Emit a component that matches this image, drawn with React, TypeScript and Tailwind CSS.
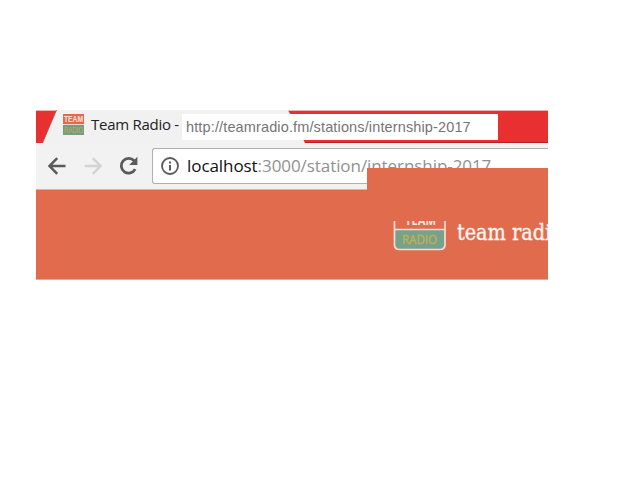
import React from "react";

function BackIcon() {
  return (
    <svg className="shrink-0" width="18" height="18" viewBox="0 0 18 18" fill="none" stroke="#5a5a5a" strokeWidth="2.5">
      <path d="M17.5 9H2M9.2 1.2L1.4 9l7.8 7.8" />
    </svg>
  );
}

function ForwardIcon() {
  return (
    <svg className="shrink-0" width="18" height="18" viewBox="0 0 18 18" fill="none" stroke="#d3d3d3" strokeWidth="2.4">
      <path d="M0.5 9H16M8.8 1.2L16.6 9l-7.8 7.8" />
    </svg>
  );
}

function ReloadIcon() {
  return (
    <svg className="shrink-0" width="20" height="20" viewBox="0 0 20 20">
      <path d="M16.2 13.2A7.4 7.4 0 1 1 15.2 4.8" fill="none" stroke="#5a5a5a" strokeWidth="2.8" />
      <path d="M18.4 0.8v8.2h-8.2z" fill="#5a5a5a" />
    </svg>
  );
}

function InfoIcon() {
  return (
    <svg className="shrink-0" width="18" height="18" viewBox="0 0 18 18">
      <circle cx="9" cy="9" r="8" fill="none" stroke="#5a5a5a" strokeWidth="1.8" />
      <path d="M8 4.4h2v2H8zM8 8h2v5.4H8z" fill="#5a5a5a" />
    </svg>
  );
}

function Favicon() {
  return (
    <svg width="21" height="21" viewBox="0 0 21 21" fontFamily="'Liberation Sans', sans-serif" fontSize="9" textAnchor="middle">
      <rect width="21" height="10" fill="#e2694c" />
      <rect y="10" width="21" height="1" fill="#f3ddd3" />
      <rect y="11" width="21" height="10" fill="#759b83" />
      <text x="10.5" y="8.4" fill="#fbe4dc" fontWeight="bold" textLength="19" lengthAdjust="spacingAndGlyphs">TEAM</text>
      <text x="10.5" y="19.2" fill="#b5a65e" stroke="#b5a65e" strokeWidth="0.3" textLength="19" lengthAdjust="spacingAndGlyphs">RADIO</text>
    </svg>
  );
}

function StationLogo() {
  return (
    <svg className="shrink-0" width="54" height="30" viewBox="0 0 54 30" fontFamily="'Open Sans', sans-serif" textAnchor="middle">
      <path d="M1.5 8.5H52V23.5Q52 28.5 47 28.5H6.5Q1.5 28.5 1.5 23.5Z" fill="#76a28c" />
      <path d="M1.5 0V23.5Q1.5 28.5 6.5 28.5H47Q52 28.5 52 23.5V0M1.5 8.5H52" fill="none" stroke="#f6ddd2" strokeWidth="1.7" />
      <text x="27.5" y="3.6" fill="#fae6de" fontWeight="700" fontSize="13" textLength="31" lengthAdjust="spacingAndGlyphs">TEAM</text>
      <text x="26.5" y="22.8" fill="#c5ae4d" stroke="#c5ae4d" strokeWidth="0.35" fontSize="12" textLength="35" lengthAdjust="spacingAndGlyphs">RADIO</text>
    </svg>
  );
}

function TabStrip() {
  return (
    <div className="relative h-[33px] border-t border-[#eeb0b0] bg-[#e93030]">
      <svg className="absolute -top-px left-0" width="512" height="33" viewBox="0 0 512 33">
        <path d="M268 32.5H512" stroke="#b52329" />
        <path d="M6.5 33L20.5 0H252L269 33Z" fill="#f1f1f1" />
        <path d="M6.5 33L20.5 0" stroke="#b9484a" strokeWidth="0.8" />
      </svg>
      <div className="relative flex h-[32px] items-start pl-[27px]">
        <div className="mt-[3px]"><Favicon /></div>
        <span className="ml-[7px] mt-[3px] w-[91px] whitespace-nowrap font-['Open_Sans',sans-serif] text-[15px] leading-5 tracking-[-0.27px] text-[#222]">
          Team Radio -
        </span>
        <span className="mt-[3px] flex h-[26px] w-[316px] items-center whitespace-nowrap bg-white pl-1 pt-[2px] font-['Liberation_Sans',Arial,sans-serif] text-[14.5px] tracking-[0.135px] text-[#757575]">
          http://teamradio.fm/stations/internship-2017
        </span>
      </div>
    </div>
  );
}

function Toolbar() {
  return (
    <div className="flex h-[47px] items-start border-b border-[#bdbdbd] bg-[#f2f2f2] pt-[5px]">
      <div className="flex h-[36px] shrink-0 items-center pl-[12px]">
        <BackIcon />
        <div className="ml-[18px]"><ForwardIcon /></div>
        <div className="ml-[17px]"><ReloadIcon /></div>
      </div>
      <div className="ml-[13px] flex h-[36px] flex-1 items-center rounded-l-[3px] border border-r-0 border-[#b0b0b0] bg-white pl-[8px]">
        <InfoIcon />
        <span className="ml-[8px] whitespace-nowrap font-['Open_Sans',sans-serif] text-[17px] leading-6 tracking-[-0.07px] text-[#919191]">
          <span className="text-[#111]">localhost</span>:3000/station/internship-2017
        </span>
      </div>
    </div>
  );
}

export default function App() {
  return (
    <main className="h-[480px] w-[640px] overflow-hidden bg-white pl-[36px] pt-[110px]">
      <div className="relative h-[170px] w-[512px] overflow-hidden">
        <TabStrip />
        <Toolbar />
        <div className="relative flex h-[90px] items-start border-b border-[#eca58f] bg-[#e06b4d] pl-[357px] pt-[31px]">
          <div className="absolute bottom-full left-[331px] h-[22px] w-[181px] bg-[#e06b4d]" />
          <StationLogo />
          <span className="ml-[10px] -mt-[2px] whitespace-nowrap font-['DejaVu_Serif_Condensed','DejaVu_Serif',serif] text-[21.5px] leading-7 tracking-[-0.05px] text-[#fff5f0] [-webkit-text-stroke:0.35px_#fff5f0]">
            team radi
          </span>
        </div>
      </div>
    </main>
  );
}
